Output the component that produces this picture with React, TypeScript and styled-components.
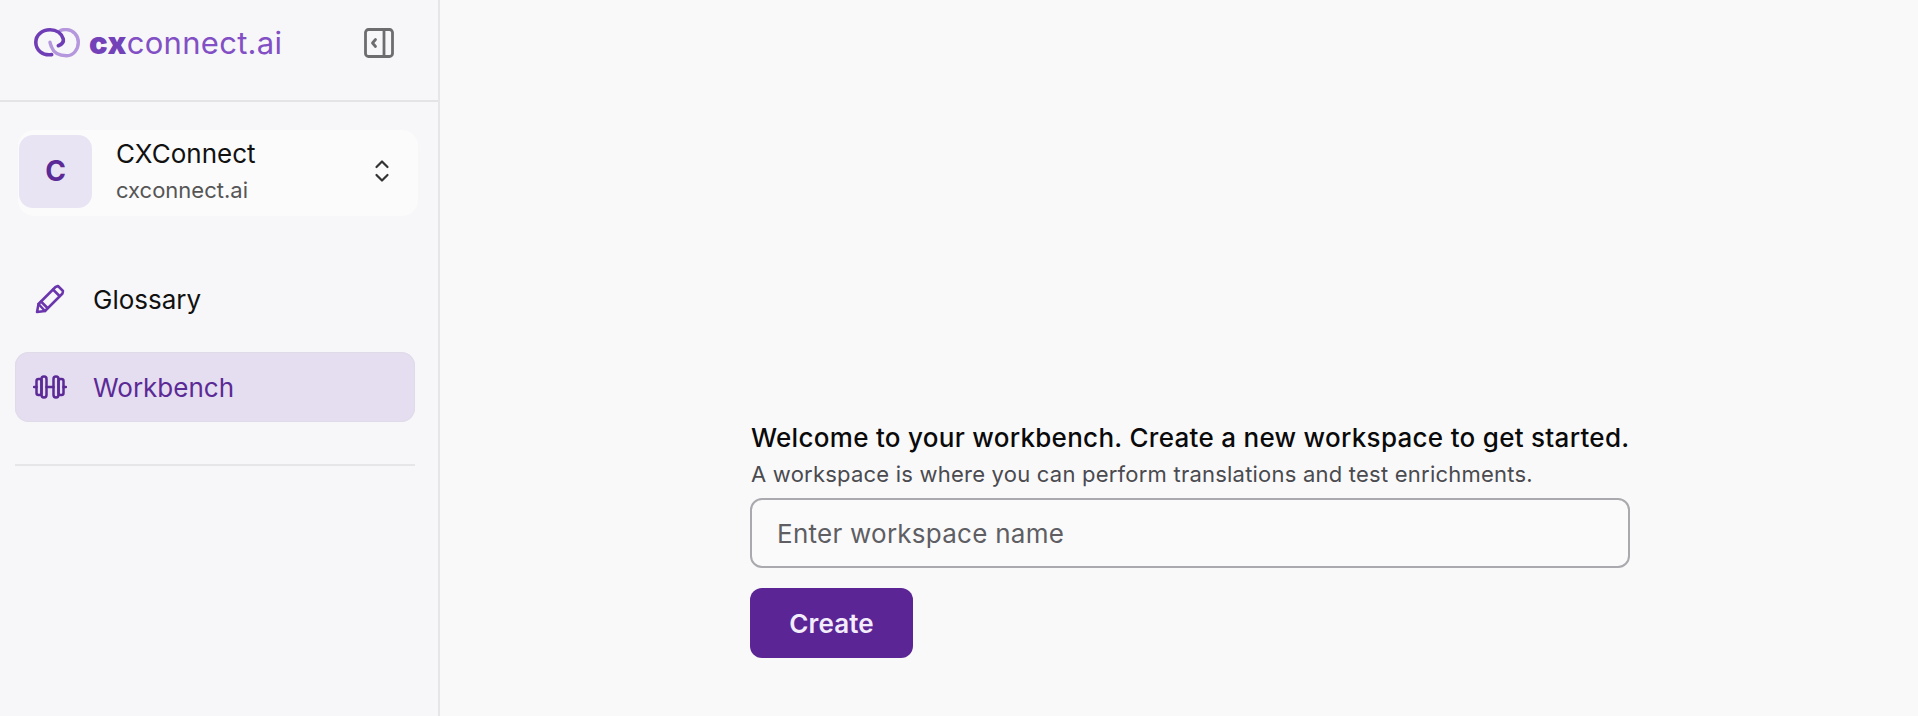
import React from "react";
import styled, { createGlobalStyle } from "styled-components";

const Global = createGlobalStyle`
  html, body { margin: 0; padding: 0; height: 100%; background: #f9f9fa; }
  #root { height: 100%; }
  * { box-sizing: border-box; }
`;

const Page = styled.div`
  display: flex;
  width: 100%;
  height: 716px;
  overflow: hidden;
  font-family: Inter, "Liberation Sans", sans-serif;
  color: #0a0a0a;
`;

const Sidebar = styled.aside`
  width: 440px;
  flex: none;
  background: #f7f7f9;
  border-right: 2px solid #e6e6e9;
  display: flex;
  flex-direction: column;
`;

const SideHeader = styled.header`
  height: 102px;
  flex: none;
  border-bottom: 2px solid #e4e4e7;
  display: flex;
  align-items: center;
  justify-content: space-between;
  padding: 0 44px 14px 34px;
`;

const Brand = styled.div`
  display: flex;
  align-items: center;
  gap: 9px;
`;

const Wordmark = styled.span`
  font-size: 31px;
  line-height: 36px;
  color: #8250c4;
  letter-spacing: 0.3px;
  & b { font-weight: 900; color: #7442b8; }
`;

const AccountCard = styled.div`
  margin: 28px 20px 0 18px;
  height: 86px;
  background: #fbfbfc;
  border-radius: 16px;
  display: flex;
  align-items: center;
  padding: 0 28px 4px 1px;
`;

const Avatar = styled.div`
  width: 73px;
  height: 73px;
  border-radius: 14px;
  background: #e9e4f3;
  color: #5b2a96;
  font-size: 28px;
  font-weight: 700;
  display: flex;
  align-items: center;
  justify-content: center;
  flex: none;
`;

const AccountText = styled.div`
  flex: 1;
  margin: 0 0 1px 24px;
  display: flex;
  flex-direction: column;
  gap: 7px;
`;

const AccountName = styled.div`
  font-size: 26px;
  line-height: 32px;
  color: #111;
`;

const AccountDomain = styled.div`
  font-size: 22px;
  line-height: 26px;
  color: #555;
`;

const Nav = styled.nav`
  margin: 48px 23px 0 15px;
  display: flex;
  flex-direction: column;
  gap: 18px;
`;

const NavItem = styled.div<{ $active?: boolean }>`
  height: 70px;
  border-radius: 14px;
  display: flex;
  align-items: center;
  padding-left: 18px;
  gap: 26px;
  font-size: 26px;
  color: ${(p) => (p.$active ? "#5b2a96" : "#111")};
  background: ${(p) => (p.$active ? "#e5ddf0" : "transparent")};
  box-shadow: ${(p) => (p.$active ? "inset 0 0 0 1px #e0dbe8" : "none")};
`;

const IconSlot = styled.span`
  width: 34px;
  height: 34px;
  flex: none;
  display: flex;
  align-items: center;
  justify-content: center;
`;

const Divider = styled.hr`
  margin: 42px 23px 0 15px;
  border: 0;
  height: 2px;
  background: #e6e6e9;
`;

const Main = styled.main`
  flex: 1;
  background: #f9f9fa;
  display: flex;
  flex-direction: column;
  justify-content: flex-end;
  padding: 0 0 58px 310px;
`;

const Form = styled.div`
  width: 880px;
  display: flex;
  flex-direction: column;
  align-items: flex-start;
`;

const Title = styled.h1`
  margin: 0 0 0 1px;
  font-size: 26px;
  line-height: 36px;
  font-weight: 500;
  letter-spacing: 0.29px;
  color: #0a0a0a;
  white-space: nowrap;
`;

const Subtitle = styled.p`
  margin: 4px 0 0 1px;
  font-size: 22px;
  line-height: 28px;
  letter-spacing: 0.22px;
  color: #4a4a4f;
  white-space: nowrap;
`;

const NameInput = styled.input`
  margin-top: 10px;
  width: 100%;
  height: 70px;
  border: 2px solid #a9a9ae;
  border-radius: 12px;
  background: #fafafb;
  padding: 0 25px;
  font: 26px Inter, "Liberation Sans", sans-serif;
  letter-spacing: 0.25px;
  color: #111;
  outline: none;
  &::placeholder { color: #5e5e63; opacity: 1; }
`;

const CreateButton = styled.button`
  margin-top: 20px;
  width: 163px;
  height: 70px;
  border: 0;
  border-radius: 12px;
  background: #5b2595;
  color: #f3ecfb;
  font: 600 26px Inter, "Liberation Sans", sans-serif;
  letter-spacing: 0.1px;
`;

const LogoMark = () => (
  <svg width="46" height="30" viewBox="0 0 46 30" fill="none" strokeLinecap="round" strokeLinejoin="round">
    <path d="M26 2.9C28 1.6 30.3 1.4 32.7 1.6C39.5 2.1 44.3 7.7 44.3 14.3C44.3 21.6 39.3 27.7 32.7 27.7C25 27.7 19.5 24.5 17.7 19.3C17 17.5 16.2 16 16 14.3" stroke="#b597de" strokeWidth="3.4" />
    <path d="M17.7 26.6C8.5 28 1.8 22 1.8 14.3C1.8 7 8 1.8 16 1.8C22.5 1.8 27.6 5.5 29.3 11C29.8 14 27.5 16.5 24.3 17.7" stroke="#6f3db5" strokeWidth="3.6" />
  </svg>
);

const CollapseIcon = () => (
  <svg width="30" height="30" viewBox="0 0 30 30" fill="none" stroke="#6d6d70" strokeWidth="2.8" strokeLinejoin="round">
    <rect x="1.5" y="1.5" width="27" height="27" rx="3" />
    <path d="M20 2V28" />
    <path d="M11.5 11.5L8.5 15L11.5 18.5" strokeLinecap="round" />
  </svg>
);

const UpDownIcon = () => (
  <svg width="16" height="24" viewBox="0 0 16 24" fill="none" stroke="#333" strokeWidth="2.2" strokeLinecap="round" strokeLinejoin="round">
    <path d="M2.5 8L8 2.5L13.5 8" />
    <path d="M2.5 16L8 21.5L13.5 16" />
  </svg>
);

const PencilIcon = () => (
  <svg width="30" height="30" viewBox="0 0 30 30" fill="none" stroke="#6a35ad" strokeWidth="2.5" strokeLinejoin="round" strokeLinecap="round">
    <path d="M2 28L3.5 20L20.5 3L23 2L28 7L27.5 9.5L10 27Z" />
    <path d="M3.5 20L10 27" />
    <path d="M6 17.5L12.5 24" />
    <path d="M18 5.5L24.5 12" />
  </svg>
);

const DumbbellIcon = () => (
  <svg width="34" height="24" viewBox="0 0 34 24" fill="none" stroke="#5b2a96" strokeWidth="2.5" strokeLinejoin="round" strokeLinecap="round">
    <rect x="3.5" y="4" width="5" height="16" rx="2" />
    <rect x="8.5" y="1.5" width="5" height="21" rx="2.4" />
    <rect x="20.5" y="1.5" width="5" height="21" rx="2.4" />
    <rect x="25.5" y="4" width="5" height="16" rx="2" />
    <path d="M13.5 12H20.5" />
    <path d="M1 12H3.5" />
    <path d="M30.5 12H33" />
  </svg>
);

export default function App() {
  return (
    <Page>
      <Global />
      <Sidebar>
        <SideHeader>
          <Brand>
            <LogoMark />
            <Wordmark><b>cx</b>connect.ai</Wordmark>
          </Brand>
          <CollapseIcon />
        </SideHeader>
        <AccountCard>
          <Avatar>C</Avatar>
          <AccountText>
            <AccountName>CXConnect</AccountName>
            <AccountDomain>cxconnect.ai</AccountDomain>
          </AccountText>
          <UpDownIcon />
        </AccountCard>
        <Nav>
          <NavItem>
            <IconSlot><PencilIcon /></IconSlot>
            Glossary
          </NavItem>
          <NavItem $active>
            <IconSlot><DumbbellIcon /></IconSlot>
            Workbench
          </NavItem>
        </Nav>
        <Divider />
      </Sidebar>
      <Main>
        <Form>
          <Title>Welcome to your workbench. Create a new workspace to get started.</Title>
          <Subtitle>A workspace is where you can perform translations and test enrichments.</Subtitle>
          <NameInput placeholder="Enter workspace name" />
          <CreateButton>Create</CreateButton>
        </Form>
      </Main>
    </Page>
  );
}
